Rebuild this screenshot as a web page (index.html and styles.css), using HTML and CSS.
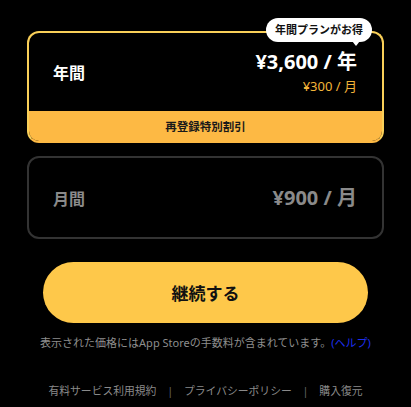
FILE: index.html
```html
<!DOCTYPE html>
<html lang="ja">
<head>
    <meta charset="UTF-8">
    <meta name="viewport" content="width=device-width, initial-scale=1.0">
    <title>プラン選択</title>
    <link rel="stylesheet" href="styles.css">
</head>
<body>
    <div class="container">
        <div class="plan plan-selected">
            <div class="badge">年間プランがお得</div>
            <div class="plan-main">
                <span class="plan-name">年間</span>
                <div class="plan-price">
                    <div class="price-big">¥3,600 / 年</div>
                    <div class="price-sub">¥300 / 月</div>
                </div>
            </div>
            <div class="plan-band">再登録特別割引</div>
        </div>

        <div class="plan">
            <div class="plan-main plan-main-short">
                <span class="plan-name">月間</span>
                <div class="price-big">¥900 / 月</div>
            </div>
        </div>

        <button class="continue-btn">継続する</button>

        <p class="note">表示された価格にはApp Storeの手数料が含まれています。<a href="#" class="help">(ヘルプ)</a></p>

        <nav class="footer-links">
            <a href="#">有料サービス利用規約</a>
            <span class="sep">|</span>
            <a href="#">プライバシーポリシー</a>
            <span class="sep">|</span>
            <a href="#">購入復元</a>
        </nav>
    </div>
</body>
</html>
```

FILE: styles.css
```css
body {
    margin: 0;
    padding: 0;
    background-color: #000;
    font-family: "Noto Sans", "Noto Sans CJK JP", sans-serif;
    color: #fff;
}
.container {
    padding: 31px 27px 0;
}
.plan {
    position: relative;
    border: 2px solid #333;
    border-radius: 12px;
    margin-bottom: 13px;
}
.plan-selected {
    border-color: #f9cf58;
    border-bottom-color: #fdb944;
}
.badge {
    position: absolute;
    top: -15px;
    right: 10px;
    height: 24px;
    line-height: 24px;
    padding: 0 9px;
    background-color: #fff;
    color: #111;
    font-size: 11px;
    font-weight: bold;
    border-radius: 12px;
}
.badge::after {
    content: "";
    position: absolute;
    right: 12px;
    bottom: -4px;
    border-left: 4px solid transparent;
    border-right: 4px solid transparent;
    border-top: 5px solid #fff;
}
.plan-main {
    display: flex;
    align-items: center;
    justify-content: space-between;
    height: 78px;
    padding: 0 25px 0 24px;
}
.plan-main-short {
    height: 79px;
    color: #8a8a8a;
}
.plan-name {
    font-size: 16px;
    font-weight: bold;
}
.plan-price {
    display: flex;
    flex-direction: column;
    align-items: flex-end;
    gap: 3px;
}
.price-big {
    font-size: 20px;
    font-weight: bold;
    line-height: 24px;
}
.price-sub {
    font-size: 13px;
    line-height: 18px;
    color: #f3b53a;
}
.plan-band {
    height: 30px;
    line-height: 31px;
    text-align: center;
    background-color: #fdb944;
    color: #1a1a1a;
    font-size: 11.5px;
    font-weight: bold;
    border-radius: 0 0 10px 10px;
}
.continue-btn {
    display: block;
    width: calc(100% - 32px);
    height: 61px;
    margin: 23px auto 0;
    border: none;
    border-radius: 31px;
    background-color: #fec84a;
    color: #111;
    font-family: inherit;
    font-size: 17px;
    font-weight: bold;
    cursor: pointer;
}
.note {
    margin: 12px 0 0;
    text-align: center;
    font-size: 11px;
    line-height: 16px;
    color: #8e8e8e;
}
.help {
    color: #1e2ff0;
    text-decoration: none;
}
.footer-links {
    margin-top: 32px;
    text-align: center;
    font-size: 10.8px;
    line-height: 16px;
}
.footer-links a {
    color: #8a8a8a;
    text-decoration: none;
}
.sep {
    color: #666;
    margin: 0 8px;
}
```
